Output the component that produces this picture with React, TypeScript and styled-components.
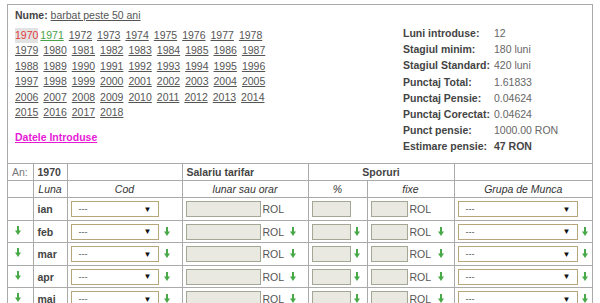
import React from "react";
import styled, { createGlobalStyle } from "styled-components";

const GlobalStyle = createGlobalStyle`
  body {
    margin: 0;
    background: #fff;
    font-family: "Liberation Sans", Arial, sans-serif;
    font-size: 10.5px;
    color: #444;
  }
`;

const Box = styled.div`
  margin: 4px 0 0 7px;
  width: 586px;
  box-sizing: border-box;
  border: 1px solid #aaa;
`;

const Top = styled.div`
  display: flex;
`;

const LeftCol = styled.div`
  width: 395px;
  box-sizing: border-box;
  padding: 3px 0 18px 7px;
`;

const NameLine = styled.div`
  line-height: 15px;
`;

const Label = styled.b`
  color: #444;
`;

const Link = styled.a`
  color: #555;
  text-decoration: underline;
`;

const Years = styled.div`
  width: 262px;
  margin-top: 5px;
  line-height: 15.4px;
`;

const Year = styled.a<{ $state?: "current" | "next" }>`
  display: inline-block;
  margin-right: ${(p) => (p.$state === "current" ? "2px" : "5px")};
  color: ${(p) =>
    p.$state === "current" ? "#e23b3b" : p.$state === "next" ? "#4aa14a" : "#555"};
  background: ${(p) => (p.$state === "current" ? "#e2e2e2" : "transparent")};
  text-decoration: ${(p) => (p.$state === "current" ? "none" : "underline")};
`;

const Entered = styled.a`
  display: block;
  margin-top: 10px;
  line-height: 15px;
  color: #e619d6;
  font-weight: bold;
  text-decoration: underline;
`;

const Stats = styled.div`
  display: grid;
  grid-template-columns: 91px auto;
  grid-auto-rows: 16.2px;
  align-items: center;
  padding-top: 20px;
`;

const StatLabel = styled.span`
  font-weight: bold;
  color: #444;
`;

const StatValue = styled.span<{ $strong?: boolean }>`
  color: ${(p) => (p.$strong ? "#444" : "#666")};
  font-weight: ${(p) => (p.$strong ? "bold" : "normal")};
`;

const Table = styled.table`
  width: 100%;
  border-collapse: collapse;
  table-layout: fixed;
`;

const HeadCell = styled.td<{ $align?: string; $italic?: boolean; $muted?: boolean }>`
  height: 16px;
  padding: 0 4px;
  border: 1px solid #aaa;
  text-align: ${(p) => p.$align || "left"};
  font-style: ${(p) => (p.$italic ? "italic" : "normal")};
  font-weight: ${(p) => (p.$muted || p.$italic ? "normal" : "bold")};
  color: ${(p) => (p.$muted ? "#777" : p.$italic ? "#333" : "#444")};
  &:first-child {
    border-left: 0;
  }
  &:last-child {
    border-right: 0;
  }
`;

const Cell = styled.td<{ $pad?: number }>`
  height: 21.5px;
  padding: 0 0 0 ${(p) => (p.$pad ?? 3)}px;
  border: 1px solid #aaa;
  vertical-align: middle;
  &:first-child {
    border-left: 0;
  }
  &:last-child {
    border-right: 0;
  }
`;

const Month = styled.b`
  color: #444;
`;

const CellRow = styled.div<{ $gap?: number }>`
  display: flex;
  align-items: center;
  gap: ${(p) => p.$gap ?? 4}px;
`;

const SelectBox = styled.div<{ $w: number }>`
  width: ${(p) => p.$w}px;
  height: 16px;
  box-sizing: border-box;
  border: 1px solid #b7a67c;
  background: #fff;
  display: flex;
  align-items: center;
  justify-content: space-between;
  padding: 0 6px 0 7px;
  font-size: 9px;
  color: #555;
`;

const Caret = styled.span`
  font-size: 8px;
  color: #111;
`;

const TextBox = styled.input<{ $w: number }>`
  width: ${(p) => p.$w}px;
  height: 16px;
  box-sizing: border-box;
  margin: 0;
  padding: 0;
  border: 1px solid #a2a895;
  background: #e9e9e2;
`;

const Unit = styled.span`
  color: #555;
  font-size: 10.5px;
`;

const Spacer = styled.span<{ $w: number }>`
  width: ${(p) => p.$w}px;
`;

const ArrowIcon = () => (
  <svg width="6" height="10" viewBox="0 0 6 10">
    <rect x="2" y="0" width="2" height="5" fill="#47a947" />
    <polygon points="0,4.5 6,4.5 3,9" fill="#47a947" />
  </svg>
);

const years = Array.from({ length: 49 }, (_, i) => 1970 + i);
const months = ["ian", "feb", "mar", "apr", "mai", "iun", "iul", "aug", "sep", "oct", "noi", "dec"];

const stats: [string, string, boolean?][] = [
  ["Luni introduse:", "12"],
  ["Stagiul minim:", "180 luni"],
  ["Stagiul Standard:", "420 luni"],
  ["Punctaj Total:", "1.61833"],
  ["Punctaj Pensie:", "0.04624"],
  ["Punctaj Corectat:", "0.04624"],
  ["Punct pensie:", "1000.00 RON"],
  ["Estimare pensie:", "47 RON", true],
];

const MonthRow: React.FC<{ month: string; first: boolean }> = ({ month, first }) => {
  const arrow = first ? null : <ArrowIcon />;
  return (
    <tr>
      <Cell $pad={7}>{arrow}</Cell>
      <Cell $pad={4}>
        <Month>{month}</Month>
      </Cell>
      <Cell>
        <CellRow $gap={5}>
          <SelectBox $w={88}>
            <span>---</span>
            <Caret>▼</Caret>
          </SelectBox>
          {arrow}
        </CellRow>
      </Cell>
      <Cell>
        <CellRow $gap={2}>
          <TextBox $w={75} readOnly />
          <Unit>ROL</Unit>
          <Spacer $w={2} />
          {arrow}
        </CellRow>
      </Cell>
      <Cell>
        <CellRow $gap={3}>
          <TextBox $w={39} readOnly />
          {arrow}
        </CellRow>
      </Cell>
      <Cell>
        <CellRow $gap={2}>
          <TextBox $w={37} readOnly />
          <Unit>ROL</Unit>
          <Spacer $w={3} />
          {arrow}
        </CellRow>
      </Cell>
      <Cell>
        <CellRow $gap={4}>
          <SelectBox $w={120}>
            <span>---</span>
            <Caret>▼</Caret>
          </SelectBox>
          {arrow}
        </CellRow>
      </Cell>
    </tr>
  );
};

const App: React.FC = () => {
  return (
    <>
      <GlobalStyle />
      <Box>
        <Top>
          <LeftCol>
            <NameLine>
              <Label>Nume:</Label> <Link>barbat peste 50 ani</Link>
            </NameLine>
            <Years>
              {years.map((y) => (
                <Year key={y} $state={y === 1970 ? "current" : y === 1971 ? "next" : undefined}>
                  {y}
                </Year>
              ))}
            </Years>
            <Entered>Datele Introduse</Entered>
          </LeftCol>
          <Stats>
            {stats.map(([label, value, strong]) => (
              <React.Fragment key={label}>
                <StatLabel>{label}</StatLabel>
                <StatValue $strong={strong}>{value}</StatValue>
              </React.Fragment>
            ))}
          </Stats>
        </Top>
        <Table>
          <colgroup>
            <col style={{ width: 25 }} />
            <col style={{ width: 34 }} />
            <col style={{ width: 115 }} />
            <col style={{ width: 126 }} />
            <col style={{ width: 59 }} />
            <col style={{ width: 87 }} />
            <col />
          </colgroup>
          <tbody>
            <tr>
              <HeadCell $muted>An:</HeadCell>
              <HeadCell>1970</HeadCell>
              <HeadCell />
              <HeadCell>Salariu tarifar</HeadCell>
              <HeadCell colSpan={2} $align="center">
                Sporuri
              </HeadCell>
              <HeadCell />
            </tr>
            <tr>
              <HeadCell />
              <HeadCell $italic $align="center">Luna</HeadCell>
              <HeadCell $italic $align="center">Cod</HeadCell>
              <HeadCell $italic $align="center">lunar sau orar</HeadCell>
              <HeadCell $italic $align="center">%</HeadCell>
              <HeadCell $italic $align="center">fixe</HeadCell>
              <HeadCell $italic $align="center">Grupa de Munca</HeadCell>
            </tr>
            {months.map((m, i) => (
              <MonthRow key={m} month={m} first={i === 0} />
            ))}
          </tbody>
        </Table>
      </Box>
    </>
  );
};

export default App;
